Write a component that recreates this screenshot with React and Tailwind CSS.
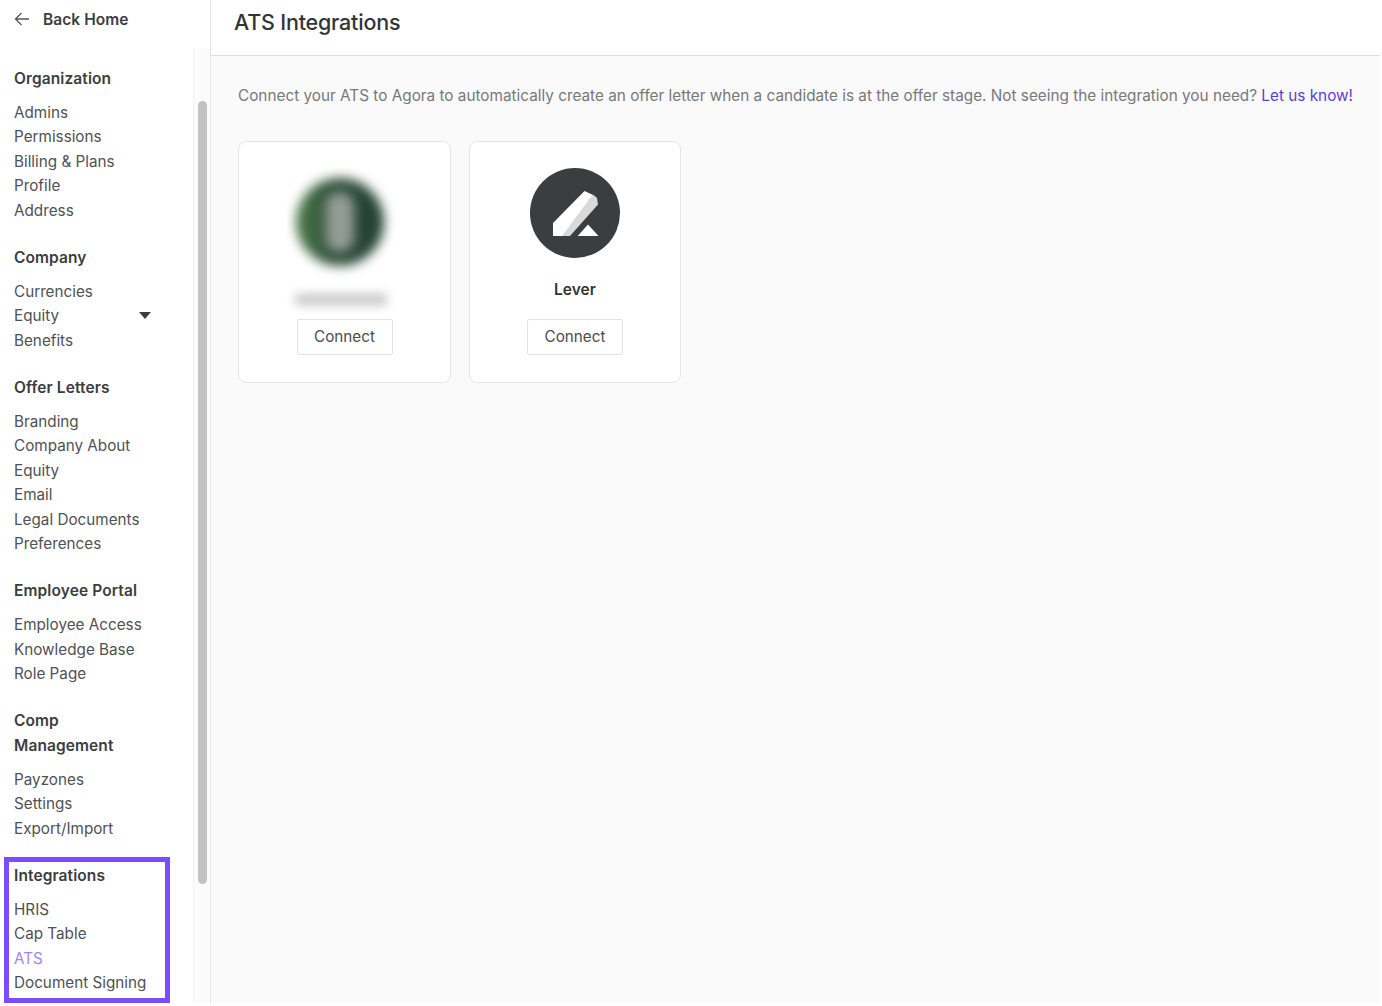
import React from "react";

const groups = [
  { title: ["Organization"], items: ["Admins", "Permissions", "Billing & Plans", "Profile", "Address"] },
  { title: ["Company"], items: ["Currencies", "Equity", "Benefits"] },
  { title: ["Offer Letters"], items: ["Branding", "Company About", "Equity", "Email", "Legal Documents", "Preferences"] },
  { title: ["Employee Portal"], items: ["Employee Access", "Knowledge Base", "Role Page"] },
  { title: ["Comp", "Management"], items: ["Payzones", "Settings", "Export/Import"] },
];

function Group({ title, items }) {
  return (
    <div className="mb-[22.5px]">
      <div className="mb-[9.5px] text-[15.5px] leading-[24.5px] font-semibold tracking-[0.1px] text-[#3c3d40]">
        {title.map((t) => (<div key={t}>{t}</div>))}
      </div>
      {items.map((item, i) => (
        <div key={i} className={"relative text-[15.25px] leading-[24.5px] " + (item === "ATS" ? "text-[#a183fb]" : "text-[#505155]")}>
          {item}
          {item === "Equity" && title[0] === "Company" && (
            <span className="absolute left-[125px] top-[8px] h-0 w-0 border-x-[6px] border-t-[7px] border-x-transparent border-t-[#3c3d40]" />
          )}
        </div>
      ))}
    </div>
  );
}

function LeverMark() {
  return (
    <svg width="90" height="90" viewBox="0 0 90 90">
      <circle cx="45" cy="45" r="45" fill="#3c3d3f" />
      <path d="M23 55 L54.5 23 L63 27 L33 68 L23 68 Z" fill="#ffffff" />
      <path d="M63 26.5 L67 30 L68 36.5 L40 68 L32 68 Z" fill="#d9d9d9" />
      <path d="M47.7 68 L58 56.5 L68.5 68 Z" fill="#ffffff" />
    </svg>
  );
}

function Card({ children, width }) {
  return (
    <div className={"flex h-[242px] flex-col items-center rounded-lg border border-[#e5e5e5] bg-white " + width}>
      {children}
      <button className="flex h-[36px] w-[96px] items-center justify-center rounded-[2px] border border-[#e3e3e3] bg-white text-[15.25px] text-[#4a4b4e]">
        Connect
      </button>
    </div>
  );
}

export default function App() {
  return (
    <div className="flex h-[1003px] w-[1380px] bg-white font-['Inter','Liberation_Sans',sans-serif] overflow-hidden">
      <aside className="relative flex w-[211px] shrink-0 flex-col border-r border-[#e6e6e6]">
        <div className="flex h-[48px] shrink-0 items-start pl-[14px] pt-[7.5px]">
          <svg width="16" height="16" viewBox="0 0 16 16" fill="none" stroke="#55565a" strokeWidth="1.3" className="mt-[3.5px]">
            <path d="M15 8H1.5M7.5 2 1.5 8l6 6" />
          </svg>
          <span className="ml-[13px] text-[15.5px] leading-[24px] font-semibold tracking-[0.05px] text-[#3c3d40]">Back Home</span>
        </div>
        <div className="flex min-h-0 flex-1">
          <nav className="flex-1 pl-[14px] pt-[18.5px]">
            {groups.map((g) => (<Group key={g.title[0]} title={g.title} items={g.items} />))}
            <div className="relative">
              <Group title={["Integrations"]} items={["HRIS", "Cap Table", "ATS", "Document Signing"]} />
              <div className="absolute left-[-10px] top-[-7px] h-[146px] w-[166px] border-[5px] border-[#7c4dff]" />
            </div>
          </nav>
          <div className="w-[17px] shrink-0 border-l border-[#f1f1f1] bg-[#fbfbfb] pl-[4px] pt-[53px]">
            <div className="h-[783px] w-[9px] rounded-full bg-[#c2c2c2]" />
          </div>
        </div>
      </aside>
      <main className="flex min-w-0 flex-1 flex-col">
        <header className="flex h-[56px] shrink-0 items-start border-b border-[#dedede] pl-[23px] pt-[6px]">
          <h1 className="text-[21.5px] leading-[32px] font-medium text-[#333438] tracking-[-0.2px]">ATS Integrations</h1>
        </header>
        <div className="flex-1 bg-[#fafafa] pl-[27px] pt-[28px]">
          <p className="text-[15.32px] leading-[24px] whitespace-nowrap text-[#77787c]">
            Connect your ATS to Agora to automatically create an offer letter when a candidate is at the offer stage. Not seeing the integration you need?{" "}
            <a className="text-[#5a3fd6]">Let us know!</a>
          </p>
          <div className="mt-[33px] flex gap-[18px]">
            <Card width="w-[213px]">
              <div className="mt-[25px] mb-[4px] mr-[5px] flex h-[148px] w-[110px] flex-col items-center overflow-hidden">
                <div className="relative mt-[11px] mr-[4px] h-[88px] w-[88px] rounded-full bg-[linear-gradient(90deg,#4b7a47_0%,#2f5039_40%,#1f3d33_100%)] blur-[6px]">
                  <div className="absolute left-[30px] top-[14px] h-[60px] w-[28px] rounded-full bg-[#949c98]" />
                </div>
                <div className="mt-[27px] mr-[2px] h-[13px] w-[94px] rounded-full bg-[#cecece] blur-[5px]" />
              </div>
            </Card>
            <Card width="w-[212px]">
              <div className="mt-[26px]"><LeverMark /></div>
              <div className="mt-[22px] mb-[19px] text-[15.5px] leading-[20px] font-semibold text-[#333438]">Lever</div>
            </Card>
          </div>
        </div>
      </main>
    </div>
  );
}
